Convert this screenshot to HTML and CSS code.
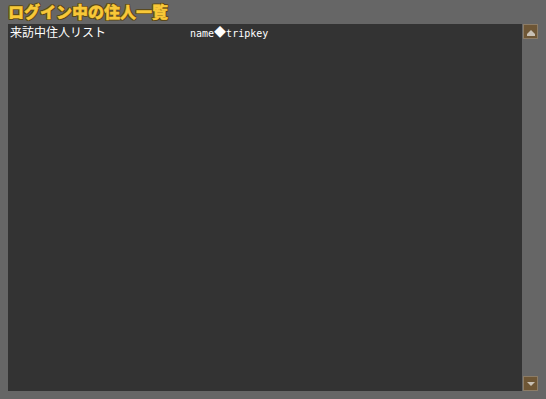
FILE: index.html
```html
<!DOCTYPE html>
<html lang="ja">
<head>
    <meta charset="UTF-8">
    <title>ログイン中の住人一覧</title>
    <link rel="stylesheet" href="styles.css">
</head>
<body>
    <h1 class="title">ログイン中の住人一覧</h1>
    <div class="box">
        <div class="list">
            <div class="row">
                <span class="col-name">来訪中住人リスト</span>
                <span class="col-key">name<span class="mark">◆</span>tripkey</span>
            </div>
        </div>
        <div class="scrollbar">
            <div class="scroll-btn up"><span class="arrow-up"></span></div>
            <div class="scroll-btn down"><span class="arrow-down"></span></div>
        </div>
    </div>
</body>
</html>
```

FILE: styles.css
```css
body {
    margin: 0;
    padding: 0 7px 8px 8px;
    background-color: #666666;
    font-family: "Noto Sans CJK JP", "DejaVu Sans", sans-serif;
    color: #ffffff;
}

.title {
    margin: 0;
    height: 24px;
    line-height: 23px;
    font-size: 16px;
    font-weight: 900;
    color: #f8c838;
    text-shadow: 1px 1px 0 #5a4818, -1px -1px 0 #5a4818, 1px -1px 0 #5a4818, -1px 1px 0 #5a4818,
        0 1px 0 #5a4818, 1px 0 0 #5a4818, 0 -1px 0 #5a4818, -1px 0 0 #5a4818;
    -webkit-text-stroke: 0.4px #f8c838;
}

.box {
    display: flex;
    height: 367px;
}

.list {
    width: 514px;
    flex-shrink: 0;
    background-color: #333333;
}

.row {
    display: flex;
    padding: 1px 0 0 2px;
    font-size: 12px;
    line-height: 14px;
}

.col-name {
    width: 180px;
}

.col-key {
    font-family: "DejaVu Sans Mono", monospace;
    font-size: 10px;
}

.mark {
    font-family: "Noto Sans CJK JP", sans-serif;
    font-size: 12px;
}

.scrollbar {
    width: 16px;
    display: flex;
    flex-direction: column;
    justify-content: space-between;
    padding-left: 1px;
}

.scroll-btn {
    width: 13px;
    height: 13px;
    background-color: #6e5635;
    border: 1px solid #8c7c66;
    display: flex;
    justify-content: center;
    align-items: center;
}

.arrow-up,
.arrow-down {
    width: 0;
    height: 0;
    border-left: 4px solid transparent;
    border-right: 4px solid transparent;
}

.arrow-up {
    border-bottom: 4px solid #c8c0b4;
    box-shadow: 0 2px 0 0 #c8c0b4;
}

.arrow-down {
    border-top: 4px solid #c8c0b4;
}
```
